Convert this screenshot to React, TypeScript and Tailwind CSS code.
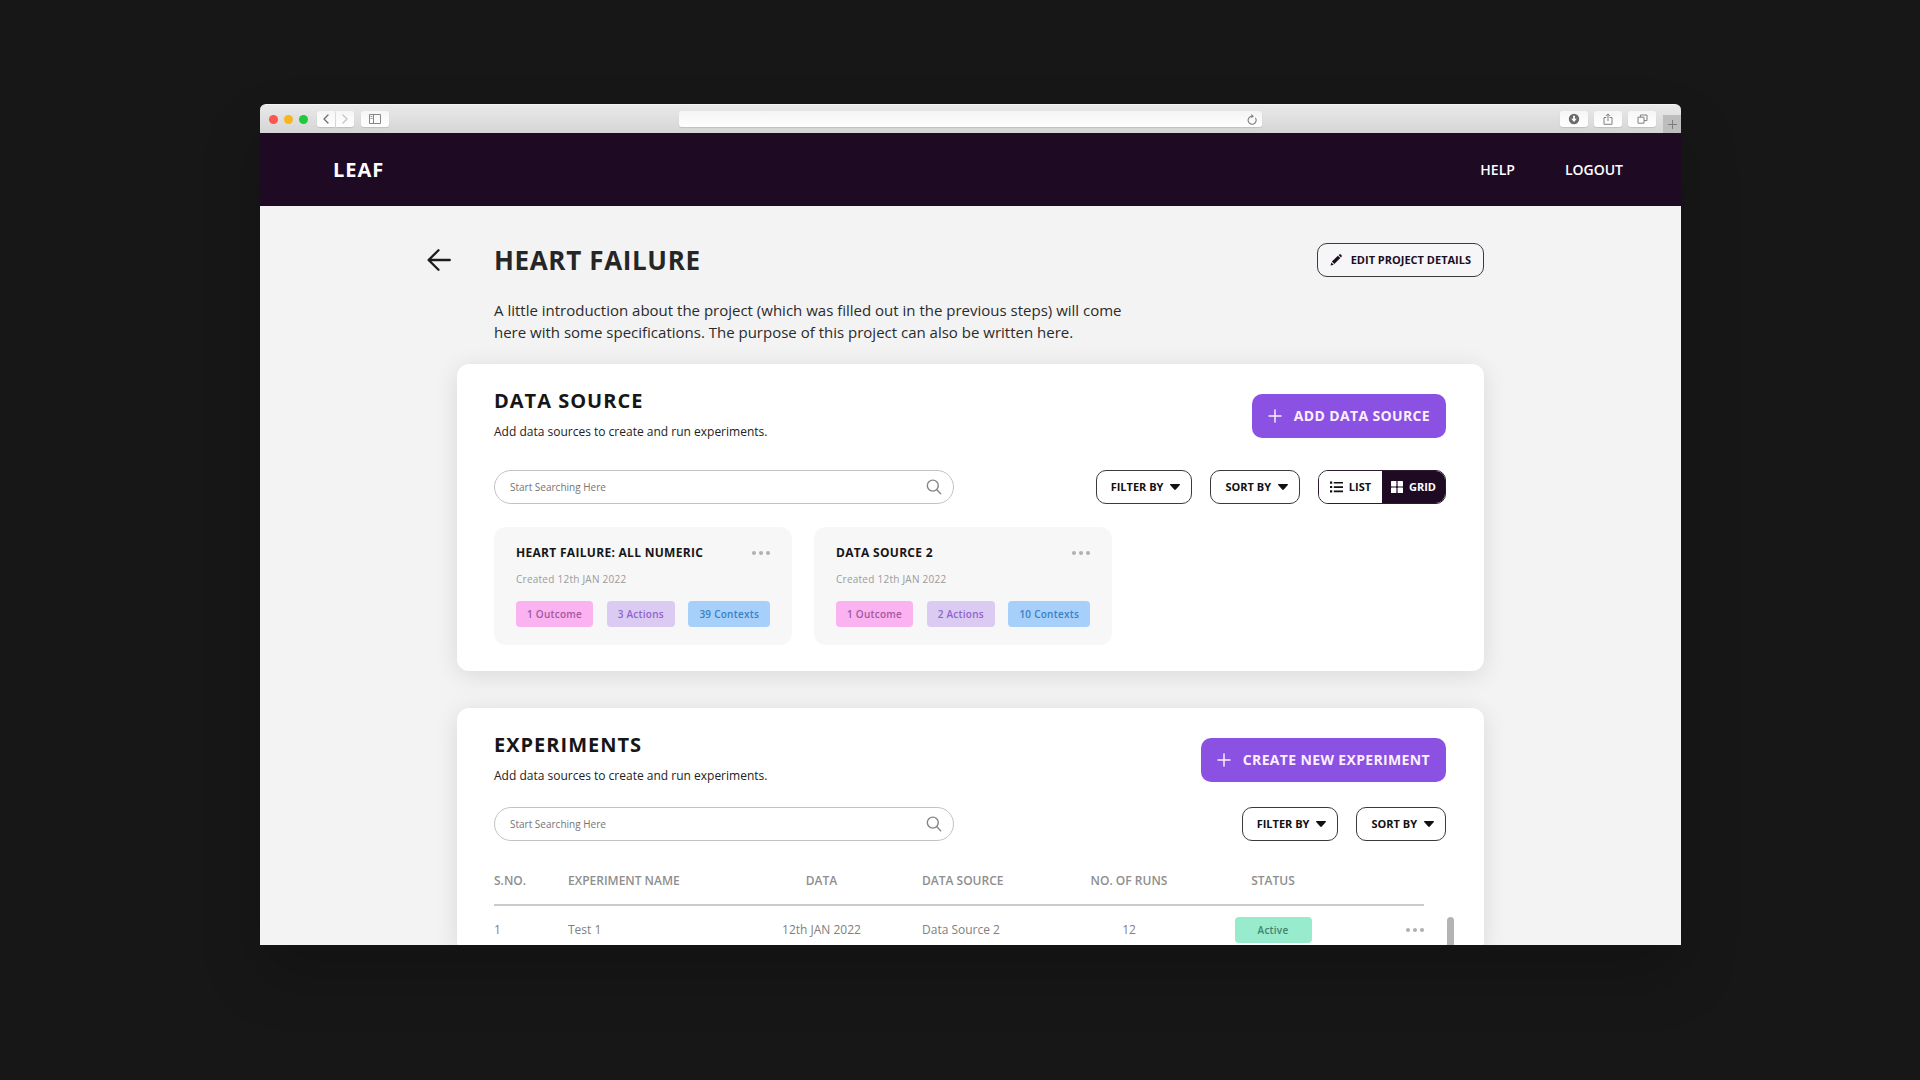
import React from "react";

type IconProps = { className?: string };

const ChevronIcon = ({ className = "" }: IconProps) => (
  <svg viewBox="0 0 8 10" className={`h-[10px] w-[8px] ${className}`} fill="none" stroke="currentColor" strokeWidth="1.3" strokeLinecap="round" strokeLinejoin="round" aria-hidden="true">
    <path d="M6 1 2 5l4 4" />
  </svg>
);

const SidebarIcon = () => (
  <svg viewBox="0 0 12 10" className="h-[10px] w-[12px]" fill="none" stroke="#858585" aria-hidden="true">
    <path d="M.5.5h11v9H.5zM4.5.5v9" />
    <path d="M1.5 2.5h2M1.5 4.5h2" strokeWidth=".8" />
  </svg>
);

const ReloadIcon = () => (
  <svg viewBox="0 0 10 11" className="h-[11px] w-[10px]" fill="none" stroke="#808080" strokeWidth="1.1" strokeLinecap="round" aria-hidden="true">
    <path d="M8.6 4.2A4 4 0 1 1 4.8 2.2" />
    <path d="M4.2.1 7 2.2 4.4 4.2z" fill="#808080" stroke="none" />
  </svg>
);

const DownloadIcon = () => (
  <svg viewBox="0 0 12 12" className="size-[12px]" aria-hidden="true">
    <circle cx="6" cy="6" r="5.2" fill="#6b6b6b" />
    <path d="M5.1 2.8h1.8v3h1.9L6 9 3.2 5.8h1.9z" fill="#fff" />
  </svg>
);

const ShareIcon = () => (
  <svg viewBox="0 0 10 12" className="h-[12px] w-[10px]" fill="none" stroke="#808080" aria-hidden="true">
    <path d="M3.4 4.5H1v6.8h8V4.5H6.6M5 8V1M2.9 3 5 .9 7.1 3" />
  </svg>
);

const TabsIcon = () => (
  <svg viewBox="0 0 11 10" className="h-[10px] w-[11px]" fill="none" stroke="#808080" aria-hidden="true">
    <path d="M1 3.2h6v6H1z" />
    <path d="M3.4 3.2V1H10v5.6H7" />
  </svg>
);

const BackIcon = () => (
  <svg viewBox="0 0 24 22" className="h-[22px] w-[24px]" fill="none" stroke="currentColor" strokeWidth="2.3" strokeLinecap="round" strokeLinejoin="round" aria-hidden="true">
    <path d="M11.5 1.3 1.6 11l9.9 9.7M1.8 11h21" />
  </svg>
);

const PencilIcon = () => (
  <svg viewBox="0 0 12 12" className="size-[12px]" fill="currentColor" aria-hidden="true">
    <path d="M1.9 7.5 7.9 1.7l2.4 2.4-6 5.8zM.5 11.6l.9-3.2 2.3 2.3zM8.6 1.1l.7-.6c.5-.5 1-.4 1.5 0l.7.7c.5.5.5 1 0 1.5l-.6.7z" />
  </svg>
);

const PlusIcon = () => (
  <svg viewBox="0 0 14 14" className="size-[14px]" fill="none" stroke="currentColor" strokeWidth="1.5" strokeLinecap="round" aria-hidden="true">
    <path d="M7 1v12M1 7h12" />
  </svg>
);

const SearchIcon = () => (
  <svg viewBox="0 0 16 16" className="size-[16px]" fill="none" stroke="#858585" strokeWidth="1.4" strokeLinecap="round" aria-hidden="true">
    <circle cx="6.8" cy="6.6" r="5.5" />
    <path d="m10.8 10.8 3.9 3.9" />
  </svg>
);

const CaretIcon = () => (
  <svg viewBox="0 0 10 6" className="h-[6px] w-[10px]" fill="currentColor" aria-hidden="true">
    <path d="M.6 0h8.8c.6 0 .8.7.4 1.1L5.8 5.6c-.5.5-1.1.5-1.6 0L.2 1.1C-.2.7 0 0 .6 0z" />
  </svg>
);

const ListIcon = () => (
  <svg viewBox="0 0 13 12" className="h-[12px] w-[13px]" fill="currentColor" aria-hidden="true">
    <path d="M0 .6h2.2v2.2H0zM0 4.9h2.2v2.2H0zM0 9.2h2.2v2.2H0zM3.8.9H13v1.7H3.8zM3.8 5.2H13v1.7H3.8zM3.8 9.5H13v1.7H3.8z" />
  </svg>
);

const GridIcon = () => (
  <svg viewBox="0 0 12 12" className="size-[12px]" fill="currentColor" aria-hidden="true">
    <rect width="5.4" height="5.4" rx=".6" />
    <rect x="6.6" width="5.4" height="5.4" rx=".6" />
    <rect y="6.6" width="5.4" height="5.4" rx=".6" />
    <rect x="6.6" y="6.6" width="5.4" height="5.4" rx=".6" />
  </svg>
);

const DotsIcon = () => (
  <svg viewBox="0 0 18 4" className="h-[4px] w-[18px]" fill="#b0b0b0" aria-hidden="true">
    <circle cx="2" cy="2" r="2" />
    <circle cx="9" cy="2" r="2" />
    <circle cx="16" cy="2" r="2" />
  </svg>
);

const chromeButton =
  "flex h-4 items-center justify-center bg-gradient-to-b from-[#f6f6f6] to-white shadow-[0_1px_1px_rgba(0,0,0,0.12)]";

function BrowserBar() {
  return (
    <div className="flex h-[29px] shrink-0 items-center overflow-hidden rounded-t-[6px] border-t border-[#f4f4f4] bg-gradient-to-b from-[#e9e9e9] to-[#d5d5d5]">
      <div className="flex flex-1 items-center">
        <div className="ml-[9px] flex gap-[6px]">
          <span className="size-[9px] rounded-full bg-[#f9574f]" />
          <span className="size-[9px] rounded-full bg-[#f9b51f]" />
          <span className="size-[9px] rounded-full bg-[#1fc83c]" />
        </div>
        <div className="ml-[9px] flex gap-px">
          <button aria-label="Previous page" className={`${chromeButton} w-[18px] rounded-l-[3px] text-[#6f6f6f]`}>
            <ChevronIcon />
          </button>
          <button aria-label="Next page" className={`${chromeButton} w-[18px] rounded-r-[3px] text-[#c4c4c4]`}>
            <ChevronIcon className="rotate-180" />
          </button>
        </div>
        <button aria-label="Toggle sidebar" className={`${chromeButton} ml-[7px] w-7 rounded-[3px]`}>
          <SidebarIcon />
        </button>
      </div>
      <div className="flex h-4 w-[41%] items-center rounded-[3px] bg-gradient-to-b from-[#f4f4f4] to-white pr-[5px] shadow-[0_1px_1px_rgba(0,0,0,0.12)]">
        <input aria-label="Address" className="h-full min-w-0 flex-1 px-2 text-[10px] outline-none" />
        <button aria-label="Reload">
          <ReloadIcon />
        </button>
      </div>
      <div className="flex flex-1 items-center justify-end gap-[6px] self-stretch">
        <button aria-label="Downloads" className={`${chromeButton} w-7 rounded-[3px]`}>
          <DownloadIcon />
        </button>
        <button aria-label="Share" className={`${chromeButton} w-7 rounded-[3px]`}>
          <ShareIcon />
        </button>
        <button aria-label="Show tabs" className={`${chromeButton} mr-px w-7 rounded-[3px]`}>
          <TabsIcon />
        </button>
        <button aria-label="New tab" className="flex h-[18px] w-[18px] items-center justify-center self-end bg-[#bdbdbd] text-[#7d7d7d]">
          <svg viewBox="0 0 9 9" className="size-[9px]" fill="none" stroke="currentColor" aria-hidden="true">
            <path d="M4.5 0v9M0 4.5h9" />
          </svg>
        </button>
      </div>
    </div>
  );
}

function SearchField({ id }: { id: string }) {
  return (
    <label htmlFor={id} className="flex h-[34px] w-[460px] items-center rounded-full border border-[#c3c3c3] pr-[11px] pl-[15px]">
      <input
        id={id}
        type="search"
        aria-label="Search"
        placeholder="Start Searching Here"
        className="min-w-0 flex-1 bg-transparent text-[10px] leading-4 outline-none placeholder:text-[#757575]"
      />
      <SearchIcon />
    </label>
  );
}

function MenuButton({ label }: { label: string }) {
  return (
    <button className="flex h-[34px] items-center gap-[7px] rounded-[10px] border border-[#3a3a3a] bg-white pr-[11px] pl-[14px] text-[11px] font-bold whitespace-nowrap text-[#111]">
      {label}
      <CaretIcon />
    </button>
  );
}

function ViewToggle() {
  return (
    <div className="flex h-[34px] overflow-hidden rounded-[10px] border border-[#2b1a30] text-[11px] font-bold">
      <button className="flex w-[63px] items-center justify-center gap-[6px] bg-white text-[#111]">
        <ListIcon />
        LIST
      </button>
      <button aria-pressed="true" className="flex w-[63px] items-center justify-center gap-[6px] bg-[#1f0a24] text-white">
        <GridIcon />
        GRID
      </button>
    </div>
  );
}

type PanelProps = { title: string; description: string; action: string; children: React.ReactNode };

function Panel({ title, description, action, children }: PanelProps) {
  return (
    <section className="rounded-[12px] bg-white pt-6 pr-[38px] pl-[37px] shadow-[0_4px_24px_rgba(0,0,0,0.11)]">
      <div className="flex items-end justify-between">
        <div>
          <h2 className="text-xl leading-[26px] font-bold tracking-wider text-[#161616]">{title}</h2>
          <p className="mt-[9px] text-xs leading-[18px] text-[#222]">{description}</p>
        </div>
        <button className="mb-[3px] flex h-[44px] items-center gap-3 rounded-[10px] bg-[#8a51e2] px-4 text-sm font-bold tracking-wide text-[#fcefff]">
          <PlusIcon />
          {action}
        </button>
      </div>
      {children}
    </section>
  );
}

type Source = { name: string; created: string; outcomes: string; actions: string; contexts: string };

const sources: Source[] = [
  { name: "HEART FAILURE: ALL NUMERIC", created: "Created 12th JAN 2022", outcomes: "1 Outcome", actions: "3 Actions", contexts: "39 Contexts" },
  { name: "DATA SOURCE 2", created: "Created 12th JAN 2022", outcomes: "1 Outcome", actions: "2 Actions", contexts: "10 Contexts" },
];

function SourceCard({ source }: { source: Source }) {
  return (
    <article className="w-[298px] rounded-[12px] bg-[#f7f7f7] px-[22px] pt-[17px] pb-[18px]">
      <div className="flex items-center justify-between">
        <h3 className="text-xs leading-[18px] font-bold tracking-wide text-[#161616]">{source.name}</h3>
        <button aria-label={`More options for ${source.name}`} className="py-1">
          <DotsIcon />
        </button>
      </div>
      <p className="mt-[9px] text-[10px] leading-4 tracking-wide text-[#9a9a9a]">{source.created}</p>
      <div className="mt-[14px] flex justify-between text-[10px] leading-[26px] font-semibold tracking-wide">
        <span className="rounded-[4px] bg-[#fab2f1] px-[11px] text-[#a4589f]">{source.outcomes}</span>
        <span className="rounded-[4px] bg-[#dbcbf3] px-[11px] text-[#9063cf]">{source.actions}</span>
        <span className="rounded-[4px] bg-[#a6d0fa] px-[11px] text-[#3b7fc4]">{source.contexts}</span>
      </div>
    </article>
  );
}

const experiments = [{ no: "1", name: "Test 1", date: "12th JAN 2022", source: "Data Source 2", runs: "12", status: "Active" }];

function ExperimentTable() {
  return (
    <div className="-mr-[8px] mt-4 flex gap-[23px]">
      <table className="min-w-0 flex-1 table-fixed border-collapse text-left text-xs text-[#808080]">
        <thead>
          <tr className="h-[48px] border-b-2 border-[#cbcbcb] text-[#8e8e8e]">
            <th className="w-[74px] font-semibold">S.NO.</th>
            <th className="font-semibold">EXPERIMENT NAME</th>
            <th className="w-[201px] text-center font-semibold">DATA</th>
            <th className="w-[136px] font-semibold">DATA SOURCE</th>
            <th className="w-[142px] text-center font-semibold">NO. OF RUNS</th>
            <th className="w-[146px] text-center font-semibold">STATUS</th>
            <th className="w-[78px]" aria-label="Options" />
          </tr>
        </thead>
        <tbody>
          {experiments.map((row) => (
            <tr key={row.no} className="h-[48px]">
              <td>{row.no}</td>
              <td>{row.name}</td>
              <td className="text-center">{row.date}</td>
              <td>{row.source}</td>
              <td className="text-center">{row.runs}</td>
              <td>
                <span className="mx-auto block w-[77px] rounded-[4px] bg-[#98ebcc] text-center text-[10px] leading-[26px] font-semibold tracking-wide text-[#3f8469]">
                  {row.status}
                </span>
              </td>
              <td>
                <button aria-label={`More options for ${row.name}`} className="ml-auto block py-1">
                  <DotsIcon />
                </button>
              </td>
            </tr>
          ))}
        </tbody>
      </table>
      <div className="mt-[60px] w-[7px] rounded-t-full bg-[#b4b4b4]" />
    </div>
  );
}

export default function App() {
  return (
    <div className="flex h-screen flex-col bg-[#171717] pt-[104px] pr-[239px] pb-[135px] pl-[260px] font-['Open_Sans',sans-serif]">
      <div className="flex min-h-0 flex-1 flex-col rounded-t-[6px] shadow-[0_30px_60px_rgba(0,0,0,0.2)]">
        <BrowserBar />
        <header className="flex h-[73px] shrink-0 items-center justify-between bg-[#1f0a24] pr-[58px] pl-[73px] text-white">
          <a href="#home" className="text-xl leading-7 font-bold tracking-wider">LEAF</a>
          <nav className="flex gap-[50px] text-sm font-semibold">
            <a href="#help">HELP</a>
            <a href="#logout">LOGOUT</a>
          </nav>
        </header>
        <main className="min-h-0 flex-1 overflow-hidden bg-[#f3f3f3] pt-[37px]">
          <div className="mx-auto w-full max-w-[1027px]">
            <div className="-ml-[30px] flex h-[34px] items-center">
              <button aria-label="Back" className="text-[#1c1c1c]">
                <BackIcon />
              </button>
              <h1 className="ml-[43px] text-[26px] leading-[34px] font-bold tracking-wide text-[#262626]">HEART FAILURE</h1>
              <button className="ml-auto flex h-[34px] items-center gap-[9px] rounded-[10px] border border-[#3a3a3a] bg-[#f6f5f8] px-[12px] text-[11px] font-bold text-[#1a0f1f]">
                <PencilIcon />
                EDIT PROJECT DETAILS
              </button>
            </div>
            <p className="mt-[22px] ml-[37px] max-w-[640px] text-[15px] leading-[22px] text-[#2b2b2b]">
              A little introduction about the project (which was filled out in the previous steps) will come here with some
              specifications. The purpose of this project can also be written here.
            </p>
            <div className="mt-[21px] flex flex-col gap-[37px]">
              <Panel title="DATA SOURCE" description="Add data sources to create and run experiments." action="ADD DATA SOURCE">
                <div className="mt-[29px] flex items-center justify-between">
                  <SearchField id="source-search" />
                  <div className="flex gap-[18px]">
                    <MenuButton label="FILTER BY" />
                    <MenuButton label="SORT BY" />
                    <ViewToggle />
                  </div>
                </div>
                <div className="mt-[23px] flex gap-[22px] pb-[26px]">
                  {sources.map((source) => (
                    <SourceCard key={source.name} source={source} />
                  ))}
                </div>
              </Panel>
              <Panel title="EXPERIMENTS" description="Add data sources to create and run experiments." action="CREATE NEW EXPERIMENT">
                <div className="mt-[22px] flex items-center justify-between">
                  <SearchField id="experiment-search" />
                  <div className="flex gap-[18px]">
                    <MenuButton label="FILTER BY" />
                    <MenuButton label="SORT BY" />
                  </div>
                </div>
                <ExperimentTable />
              </Panel>
            </div>
          </div>
        </main>
      </div>
    </div>
  );
}
